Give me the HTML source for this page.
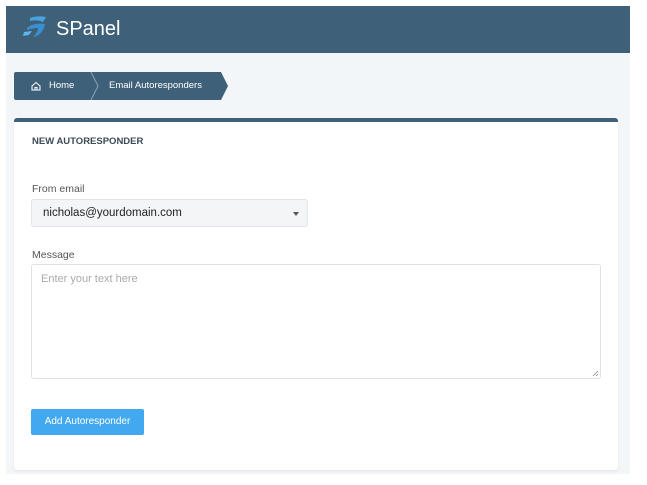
<!DOCTYPE html>
<html><head><style>
*{box-sizing:border-box;margin:0;padding:0}
body{width:647px;height:485px;background:#fff;font-family:"Liberation Sans",sans-serif;position:relative;overflow:hidden}
.hdr{position:absolute;left:6px;top:6px;width:624px;height:47px;background:#3f6079}
.logo{position:absolute;left:50px;top:12px;color:#fff;font-size:20px;font-weight:normal;letter-spacing:0}
.bg{position:absolute;left:6px;top:53px;width:624px;height:421px;background:#f3f6f8}
.bc{position:absolute;left:14px;top:72px;height:28px;width:207px;background:#3f6079;border-radius:2px 0 0 2px;color:#fff;font-size:9.5px}
.bc:after{content:"";position:absolute;right:-7px;top:0;border-left:7px solid #3f6079;border-top:14px solid transparent;border-bottom:14px solid transparent}
.card{position:absolute;left:14px;top:118px;width:604px;height:352px;background:#fff;border-top:4px solid #3f6079;border-radius:3px;box-shadow:0 1px 2px rgba(0,0,0,.08)}
.t{position:absolute;font-size:10.5px;color:#555}
</style></head><body>
<div class="hdr">
<svg style="position:absolute;left:15px;top:8px" width="30" height="28" viewBox="0 0 30 28"><path d="M9 4 C14 2 20 2 25 3 L22 8 C18 6 13 6 9 7 Z" fill="#4aa3df"/><path d="M6 14 C10 10 18 9 24 10 C23 16 19 22 12 23 C15 20 17 17 17 14 C13 14 9 15 6 16 Z" fill="#3a8fd0"/><path d="M3 18 L11 17 L8 21 L2 22Z" fill="#5fb4ea"/></svg>
<div class="logo">SPanel</div></div>
<div class="bg"></div>
<div class="bc">
<svg style="position:absolute;left:17px;top:9px" width="10" height="10" viewBox="0 0 10 10"><path d="M1 5 L5 1.5 L9 5 V9 H1 Z M4 9 V6.5 H6 V9" fill="none" stroke="#fff" stroke-width="1"/></svg>
<span style="position:absolute;left:35px;top:8px">Home</span>
<svg style="position:absolute;left:76px;top:0" width="10" height="28"><path d="M1 0 L8 14 L1 28" fill="none" stroke="#8aa3b5" stroke-width="1"/></svg>
<span style="position:absolute;left:95px;top:8px">Email Autoresponders</span>
</div>
<div class="card">
<div class="t" style="left:18px;top:14px;color:#3b4a55;font-size:9.5px;font-weight:bold">NEW AUTORESPONDER</div>
<div class="t" style="left:18px;top:61px">From email</div>
<div style="position:absolute;left:17px;top:77px;width:277px;height:28px;background:#f3f5f7;border:1px solid #e1e5e9;border-radius:3px">
<span style="position:absolute;left:11px;top:7px;font-size:11.5px;color:#222">nicholas@yourdomain.com</span>
<div style="position:absolute;right:8px;top:12px;border-top:4px solid #555;border-left:3.5px solid transparent;border-right:3.5px solid transparent"></div></div>
<div class="t" style="left:18px;top:127px">Message</div>
<div style="position:absolute;left:17px;top:142px;width:570px;height:115px;border:1px solid #dde2e6;border-radius:3px">
<span style="position:absolute;left:9px;top:8px;font-size:11px;color:#aaa">Enter your text here</span>
<svg style="position:absolute;right:1px;bottom:1px" width="7" height="7"><path d="M1 6 L6 1 M4 6 L6 4" stroke="#888" stroke-width="0.8"/></svg></div>
<div style="position:absolute;left:17px;top:287px;width:113px;height:26px;background:#42a8ef;border-radius:2px;color:#fff;font-size:10px;text-align:center;line-height:26px">Add Autoresponder</div>
</div>
</body></html>
